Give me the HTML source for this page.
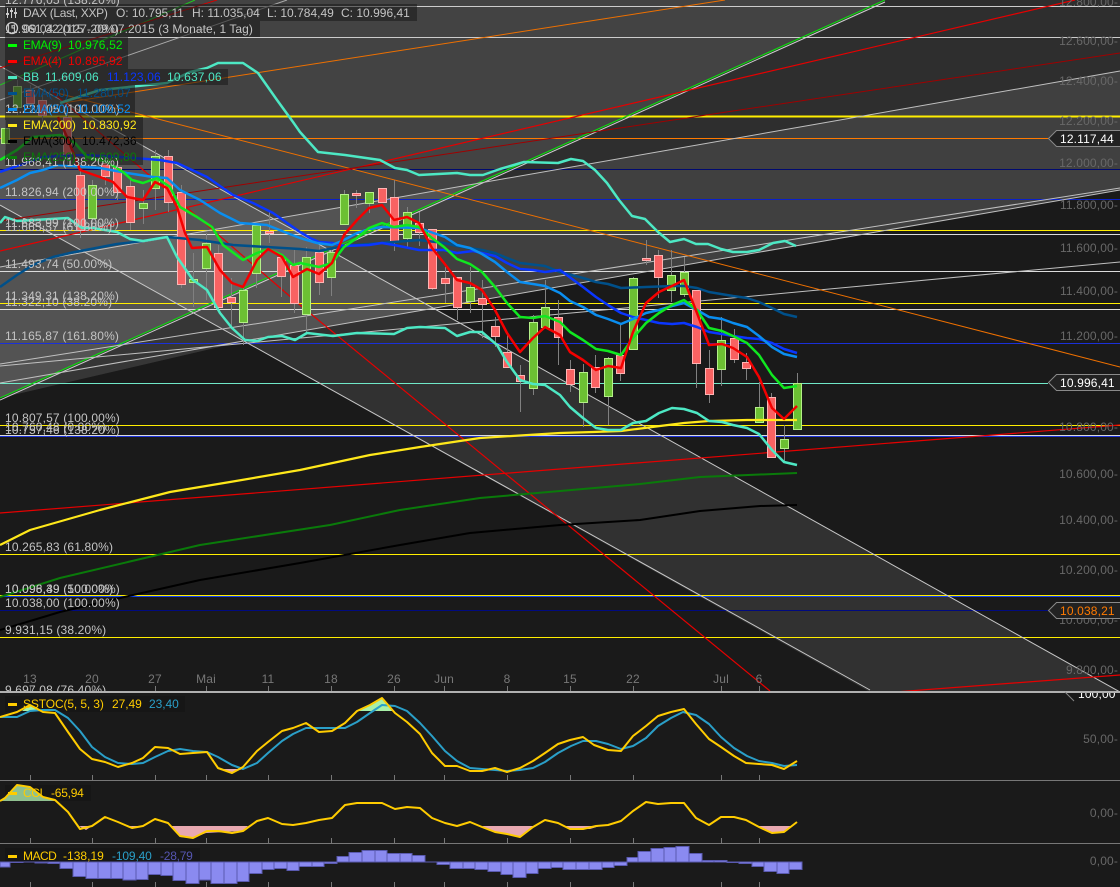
<!DOCTYPE html>
<html><head><meta charset="utf-8"><title>DAX Chart</title>
<style>
html,body{margin:0;padding:0;background:#1a1a1a;width:1120px;height:887px;overflow:hidden}
svg{display:block}
text{font-family:"Liberation Sans",sans-serif;font-size:12px;letter-spacing:.15px}
.l{fill:#c4c4c4}
.a{fill:#686868;text-anchor:end}
.d{fill:#777;text-anchor:middle}
.t{fill:none;stroke-linejoin:round}
</style></head><body>
<svg width="1120" height="887" viewBox="0 0 1120 887" xmlns="http://www.w3.org/2000/svg">
<defs><clipPath id="m"><rect x="0" y="0" width="1120" height="691"/></clipPath>
<clipPath id="p"><rect x="1060" y="693" width="60" height="12"/></clipPath></defs>
<rect width="1120" height="887" fill="#1a1a1a"/>
<g clip-path="url(#m)">
<polygon points="0,398 245,341 1120,190 1120,0 0,0" fill="#fff" fill-opacity=".09"/>
<polygon points="0,267 1120,71 1120,190 245,341 0,398" fill="#fff" fill-opacity=".09"/>
<polygon points="0,398 885,0 0,0" fill="#fff" fill-opacity=".1"/>
<polygon points="0,398 245,341 245,288" fill="#000" fill-opacity=".15"/>
<polygon points="0,66 1120,692 870,692 0,205" fill="#fff" fill-opacity=".1"/>

<!-- horizontal lines -->
<g stroke-width="1" fill="none">
<path d="M0 6.5H1120M0 37.5H1120" stroke="#ccc"/>
<path d="M0 116.5H1120" stroke="#ffee00" stroke-width="2"/>
<path d="M0 138.5H1048" stroke="#ff7a00"/>
<path d="M0 169.5H1120" stroke="#000a70"/>
<path d="M0 199.5H1120" stroke="#0a20c8"/>
<path d="M0 230.5H1120M0 303.5H1120M0 425.5H1120M0 554.5H1120M0 637.5H1120" stroke="#ffee00"/>
<path d="M0 343.5H1120M0 436.5H1120" stroke="#1a30d8"/>
<path d="M0 234.5H1120M0 271.5H1120M0 309.5H1120M0 435.5H1120" stroke="#dcdcdc"/>
<path d="M0 383.5H1048" stroke="#70e8c8"/>
<path d="M0 595.5H1120" stroke="#ffee00"/>
<path d="M0 596.5H1120" stroke="#1040f0"/>
<path d="M0 610.5H1048" stroke="#000a80"/>
</g>

<!-- sloped lines -->
<g fill="none" stroke-width="1">
<path d="M0 400L885 2" stroke="#d0d0d0"/>
<path d="M0 398L885 0" stroke="#10d810" stroke-width="1.2"/>
<path d="M0 85L195 0" stroke="#20c820"/>
<path d="M0 100L287 0" stroke="#aaa"/>
<path d="M0 267L1120 71M0 364L1120 188M0 383L1120 190M0 366L1120 262" stroke="#c0c0c0"/>
<path d="M0 66L1120 692M0 205L870 690" stroke="#c8c8c8"/>
<path d="M57 93L1120 367M63 103L725 0" stroke="#ee7000"/>
<path d="M0 513L1120 425M895 692L1120 675M0 251L1075 0" stroke="#e60000" stroke-width="1.2"/>
<path d="M0 68L217 0" stroke="#d00000"/>
<path d="M0 221L1120 53" stroke="#a00000"/>
<path d="M50 90L135 163L300 305L770 691" stroke="#e60000" stroke-width="1.2"/>
</g>

<!-- wicks -->
<path fill="none" stroke="#808080" d="M5.5 120V150M17.5 80V115M30.5 85V110M42.5 95V122M67.5 110V165M80.5 165V238M92.5 180V225M105.5 155V185M117.5 160V200M130.5 180V230M143.5 190V224M155.5 150V210M168.5 150V212M181.5 185V288M193.5 253V307M206.5 233V300M218.5 245V312M231.5 278V327M243.5 285V345M256.5 225V288M269.5 210V243M281.5 255V297M294.5 250V313M306.5 247V332M319.5 245V295M331.5 250V296M344.5 190V224M356.5 190V208M369.5 192V213M382.5 188V202M394.5 180V251M407.5 207V247M419.5 212V246M432.5 229V290M445.5 267V303M457.5 277V320M470.5 267V313M482.5 280V338M495.5 317V347M507.5 333V367M520.5 365V412M533.5 315V395M545.5 280V327M558.5 300V365M570.5 360V392M583.5 364V427M595.5 355V393M608.5 357V425M620.5 325V381M633.5 277V349M646.5 240V265M658.5 250V298M671.5 250V302M684.5 257V297M696.5 290V388M709.5 350V403M721.5 317V386M734.5 329V363M746.5 353V380M759.5 382V422M771.5 393V458M784.5 425V462M797.5 373V429"/>

<!-- candles -->
<path fill="#6cc033" stroke="#b4f088" d="M1.5 128.5h8V143.5h-8zM13.5 86.5h8V107.5h-8zM88.5 185.5h8V218.5h-8zM139.5 203.5h8V208.5h-8zM151.5 156.5h8V188.5h-8zM189.5 279.5h8V282.5h-8zM202.5 243.5h8V268.5h-8zM239.5 290.5h8V322.5h-8zM252.5 225.5h8V273.5h-8zM302.5 257.5h8V314.5h-8zM327.5 252.5h8V277.5h-8zM340.5 194.5h8V224.5h-8zM365.5 192.5h8V203.5h-8zM403.5 212.5h8V238.5h-8zM466.5 287.5h8V301.5h-8zM529.5 322.5h8V388.5h-8zM541.5 307.5h8V327.5h-8zM579.5 372.5h8V402.5h-8zM604.5 358.5h8V396.5h-8zM629.5 278.5h8V349.5h-8zM667.5 275.5h8V290.5h-8zM680.5 272.5h8V294.5h-8zM717.5 340.5h8V369.5h-8zM755.5 407.5h8V422.5h-8zM780.5 439.5h8V448.5h-8zM793.5 383.5h8V429.5h-8z"/>
<path fill="#f86262" stroke="#ffb4b4" d="M26.5 90.5h8V103.5h-8zM38.5 100.5h8V115.5h-8zM63.5 117.5h8V155.5h-8zM76.5 175.5h8V230.5h-8zM101.5 163.5h8V176.5h-8zM113.5 167.5h8V192.5h-8zM126.5 186.5h8V222.5h-8zM164.5 156.5h8V202.5h-8zM177.5 192.5h8V284.5h-8zM214.5 253.5h8V307.5h-8zM227.5 297.5h8V302.5h-8zM265.5 231.5h8V233.5h-8zM277.5 257.5h8V276.5h-8zM290.5 265.5h8V303.5h-8zM315.5 252.5h8V282.5h-8zM352.5 193.5h8V195.5h-8zM378.5 188.5h8V202.5h-8zM390.5 197.5h8V241.5h-8zM415.5 223.5h8V232.5h-8zM428.5 229.5h8V288.5h-8zM441.5 278.5h8V283.5h-8zM453.5 277.5h8V307.5h-8zM478.5 298.5h8V304.5h-8zM491.5 326.5h8V336.5h-8zM503.5 352.5h8V367.5h-8zM516.5 375.5h8V381.5h-8zM554.5 317.5h8V337.5h-8zM566.5 369.5h8V384.5h-8zM591.5 367.5h8V387.5h-8zM616.5 355.5h8V373.5h-8zM642.5 258.5h8V260.5h-8zM654.5 255.5h8V277.5h-8zM692.5 290.5h8V363.5h-8zM705.5 368.5h8V394.5h-8zM730.5 338.5h8V359.5h-8zM742.5 362.5h8V368.5h-8zM767.5 397.5h8V457.5h-8z"/>

<!-- indicators -->
<g class="t" stroke-width="2">
<polyline stroke="#000" points="0,630 60,612 133,595 200,580 300,563 400,545 470,533 560,525 640,520 700,511 760,506 797,505"/>
<polyline stroke="#0a7a0a" points="0,597 60,578 200,545 330,525 400,510 480,498 560,491 640,484 700,477 797,473"/>
<polyline stroke="#ffe81a" stroke-width="2.2" points="0,545 30,530 100,510 170,492 230,482 300,470 370,455 420,447 480,438 560,433 593,432 621,431 660,426 684,423 709,421 747,420 797,420"/>
<polyline stroke="#00508a" stroke-width="2.5" points="0,287 17,275 33,265 53,257 70,253 117,244 143,241 167,237 200,240 233,245 300,249 319,251 344,246 369,244 394,242 419,240 444,243 457,246 482,250 495,253 507,258 520,263 545,266 560,272 583,278 596,282 608,284 621,288 646,287 672,286 684,286 697,288 709,292 733,296 747,298 759,302 772,308 784,314 797,317"/>
<polyline stroke="#0a36ff" stroke-width="2.5" points="0,172 43,157 83,155 120,157 160,160 177,163 207,177 233,195 253,203 273,213 300,232 310,238 319,242 332,243 344,246 369,245 382,243 394,245 419,250 444,250 457,253 473,251 482,253 495,256 507,263 520,269 533,270 545,272 560,270 583,287 596,297 608,305 621,313 633,317 646,320 659,323 672,324 684,323 697,327 709,332 722,334 733,336 747,338 759,339 772,343 784,349 797,353"/>
<polyline stroke="#0a8ef0" stroke-width="2.5" points="0,188 17,180 30,173 43,170 58,165 100,168 127,173 153,177 167,178 180,190 200,200 220,213 240,223 267,225 287,233 300,238 317,243 332,245 344,240 357,233 369,229 382,227 419,228 445,237 457,245 470,248 482,254 495,262 507,272 520,282 533,284 545,286 560,293 570,301 583,307 596,315 608,319 621,324 633,319 646,313 659,310 672,306 684,303 697,310 709,317 722,319 733,323 747,327 759,336 772,347 784,354 797,357"/>
<polyline stroke="#4de8c4" stroke-width="2.5" points="60,103 100,90 167,83 190,72 207,68 218,63 243,63 258,73 277,100 293,122 300,132 318,152 345,155 380,160 395,168 407,170 419,175 457,173 470,175 483,175 500,169 524,162 558,163 571,159 583,161 595,170 607,183 619,200 632,216 645,219 658,232 670,242 684,239 696,244 708,244 721,249 733,252 747,252 759,250 773,243 785,241 796,246"/>
<polyline stroke="#4de8c4" stroke-width="2.5" points="0,223 5,217 17,221 68,218 82,228 93,228 117,232 130,239 143,241 167,237 177,257 193,280 207,290 220,313 232,328 245,340 257,341 268,337 282,336 295,340 307,333 333,336 357,333 394,334 407,328 420,327 445,328 457,336 470,332 482,332 497,345 507,362 520,380 533,384 545,385 560,395 570,407 583,418 596,428 608,430 621,430 633,423 646,421 659,413 672,408 684,409 697,413 709,421 722,422 733,425 747,428 759,434 772,450 784,462 797,465"/>
<polyline stroke="#10e820" stroke-width="2.5" points="0,160 17,150 33,137 60,135 75,143 87,157 107,162 123,172 132,180 143,183 157,178 170,187 180,207 197,217 212,227 223,245 243,260 257,253 268,249 282,255 293,265 300,263 319,267 332,263 344,247 357,238 369,228 382,223 394,227 407,225 419,227 432,238 444,247 457,259 470,264 482,272 495,287 507,303 520,317 533,318 545,316 560,322 570,332 583,340 596,349 608,351 621,355 633,338 646,323 659,313 672,305 684,300 697,310 709,328 722,331 733,336 747,343 759,355 772,375 784,388 797,386"/>
<polyline stroke="#f40000" stroke-width="2.5" points="58,117 67,137 80,170 100,177 113,182 127,197 143,200 155,182 167,188 177,207 185,233 192,248 207,247 220,270 232,283 243,287 257,260 268,249 282,257 293,277 300,273 307,269 319,274 332,263 344,235 357,220 369,208 382,205 394,220 407,217 419,223 432,248 444,263 457,280 470,283 482,290 495,310 507,333 520,352 533,338 545,327 560,335 570,352 583,360 596,370 608,366 621,368 633,332 646,303 659,292 672,286 684,280 697,313 709,345 722,344 733,348 747,357 759,377 772,408 784,419 797,406"/>
</g>

<!-- legend boxes -->
<g fill="#181818" fill-opacity=".55">
<rect x="5" y="4" width="412" height="17"/><rect x="5" y="21" width="255" height="16"/>
<rect x="5" y="37" width="123" height="16"/><rect x="5" y="53" width="123" height="16"/>
<rect x="5" y="69" width="223" height="16"/><rect x="5" y="85" width="130" height="16"/>
<rect x="5" y="101" width="130" height="16"/><rect x="5" y="117" width="138" height="16"/>
<rect x="5" y="133" width="138" height="16"/><rect x="5" y="149" width="138" height="16"/>
</g>

<!-- left fib labels -->
<g class="l">
<text x="5" y="4">12.776,05 (138.20%)</text>
<text x="5" y="33">11.961,32 (127.20%)</text>
<text x="5" y="113">12.221,05 (100.00%)</text>
<text x="5" y="166">11.968,41 (138.20%)</text>
<text x="5" y="196">11.826,94 (200.00%)</text>
<text x="5" y="227">11.683,99 (100.00%)</text>
<text x="5" y="231">11.665,37 (61.80%)</text>
<text x="5" y="268">11.493,74 (50.00%)</text>
<text x="5" y="300">11.349,31 (138.20%)</text>
<text x="5" y="306">11.322,10 (38.20%)</text>
<text x="5" y="340">11.165,87 (161.80%)</text>
<text x="5" y="422">10.807,57 (100.00%)</text>
<text x="5" y="431">10.760,48 (0.00%)</text>
<text x="5" y="434">10.757,46 (138.20%)</text>
<text x="5" y="551">10.265,83 (61.80%)</text>
<text x="5" y="593">10.096,39 (50.00%)</text>
<text x="5" y="593">10.098,49 (100.00%)</text>
<text x="5" y="607">10.038,00 (100.00%)</text>
<text x="5" y="634">9.931,15 (38.20%)</text>
<text x="5" y="694">9.697,08 (76.40%)</text>
</g>

<!-- legend -->
<g stroke="#ccc" fill="none">
<path d="M7.5 8V18M11.5 8V18M15.5 8V18" />
<path d="M6 14h3M10 11h3M14 13h3" stroke-width="2"/>
<circle cx="12" cy="28" r="5.5" stroke-width="1.3"/><path d="M12 25v3h3"/>
</g>
<text x="23" y="17" class="l" textLength="85">DAX (Last, XXP)</text>
<text x="116" y="17" class="l" textLength="68">O: 10.795,11</text>
<text x="192" y="17" class="l" textLength="68">H: 11.035,04</text>
<text x="267" y="17" class="l" textLength="67">L: 10.784,49</text>
<text x="341" y="17" class="l" textLength="69">C: 10.996,41</text>
<text x="23" y="33" class="l" textLength="230">09.04.2015 - 09.07.2015 (3 Monate, 1 Tag)</text>
<rect x="8" y="44" width="9" height="3" fill="#00ff00"/>
<text x="23" y="49" fill="#00f000" textLength="39">EMA(9)</text><text x="68" y="49" fill="#00f000">10.976,52</text>
<rect x="8" y="60" width="9" height="3" fill="#f00"/>
<text x="23" y="65" fill="#f00000" textLength="39">EMA(4)</text><text x="68" y="65" fill="#f00000">10.895,92</text>
<rect x="8" y="76" width="9" height="3" fill="#4de8c4"/>
<text x="23" y="81" fill="#4de8c4">BB</text><text x="45" y="81" fill="#4de8c4">11.609,06</text><text x="107" y="81" fill="#0a36ff">11.123,06</text><text x="167" y="81" fill="#4de8c4">10.637,06</text>
<rect x="8" y="92" width="9" height="3" fill="#00508a"/>
<text x="23" y="97" fill="#00508a" textLength="46">EMA(50)</text><text x="77" y="97" fill="#00508a">11.280,07</text>
<rect x="8" y="108" width="9" height="3" fill="#0a8ef0"/>
<text x="23" y="113" fill="#0a8ef0" textLength="46">EMA(20)</text><text x="77" y="113" fill="#0a8ef0">11.100,52</text>
<rect x="8" y="124" width="9" height="3" fill="#ffe81a"/>
<text x="23" y="129" fill="#ffe81a" textLength="53">EMA(200)</text><text x="82" y="129" fill="#ffe81a">10.830,92</text>
<rect x="8" y="140" width="9" height="3" fill="#000"/>
<text x="23" y="145" fill="#000" textLength="53">EMA(300)</text><text x="82" y="145" fill="#000">10.472,36</text>
<rect x="8" y="156" width="9" height="3" fill="#0a7a0a"/>
<text x="23" y="161" fill="#0a7a0a" textLength="53">EMA(250)</text><text x="82" y="161" fill="#0a7a0a">10.609,80</text>

<!-- date axis -->
<g class="d">
<text x="30" y="683">13</text><text x="92" y="683">20</text><text x="155" y="683">27</text><text x="206" y="683">Mai</text><text x="268" y="683">11</text><text x="331" y="683">18</text><text x="394" y="683">26</text><text x="444" y="683">Jun</text><text x="507" y="683">8</text><text x="570" y="683">15</text><text x="633" y="683">22</text><text x="721" y="683">Jul</text><text x="759" y="683">6</text>
</g>
<path stroke="#777" d="M30.5 686V691M92.5 686V691M155.5 686V691M206.5 686V691M268.5 686V691M331.5 686V691M394.5 686V691M444.5 686V691M507.5 686V691M570.5 686V691M633.5 686V691M721.5 686V691M759.5 686V691"/>
</g>

<!-- right axis -->
<g class="a">
<text x="1118" y="6">12.800,00-</text><text x="1118" y="45">12.600,00-</text><text x="1118" y="85">12.400,00-</text><text x="1118" y="125">12.200,00-</text><text x="1118" y="167">12.000,00-</text><text x="1118" y="209">11.800,00-</text><text x="1118" y="252">11.600,00-</text><text x="1118" y="295">11.400,00-</text><text x="1118" y="340">11.200,00-</text><text x="1118" y="431">10.800,00-</text><text x="1118" y="478">10.600,00-</text><text x="1118" y="524">10.400,00-</text><text x="1118" y="574">10.200,00-</text><text x="1118" y="624">10.000,00-</text><text x="1118" y="674">9.800,00-</text>
<text x="1118" y="743">50,00-</text><text x="1118" y="817">0,00-</text><text x="1118" y="865">0,00-</text>
</g>
<!-- value tags -->
<g fill="#222" stroke="#8a8a8a">
<path d="M1120 130.5H1056.5L1048.5 138.5L1056.5 146.5H1120"/>
<path d="M1120 374.5H1056.5L1048.5 382.5L1056.5 390.5H1120"/>
<path d="M1120 602.5H1056.5L1048.5 610.5L1056.5 618.5H1120"/>
</g>
<text x="1060" y="143" fill="#fff">12.117,44</text>
<text x="1060" y="387" fill="#fff">10.996,41</text>
<text x="1060" y="615" fill="#ff7a00">10.038,21</text>

<!-- separators -->
<rect x="0" y="691" width="1120" height="2" fill="#b0b0b0"/>
<path d="M0 780.5H1120M0 843.5H1120" stroke="#777"/>
<path d="M1065 692L1074 701" stroke="#888"/>
<text x="1078" y="698" fill="#fff" clip-path="url(#p)">100,00</text>
<path stroke="#777" d="M30.5 775V780M92.5 775V780M155.5 775V780M206.5 775V780M268.5 775V780M331.5 775V780M394.5 775V780M444.5 775V780M507.5 775V780M570.5 775V780M633.5 775V780M721.5 775V780M759.5 775V780M30.5 838V843M92.5 838V843M155.5 838V843M206.5 838V843M268.5 838V843M331.5 838V843M394.5 838V843M444.5 838V843M507.5 838V843M570.5 838V843M633.5 838V843M721.5 838V843M759.5 838V843M30.5 882V887M92.5 882V887M155.5 882V887M206.5 882V887M268.5 882V887M331.5 882V887M394.5 882V887M444.5 882V887M507.5 882V887M570.5 882V887M633.5 882V887M721.5 882V887M759.5 882V887"/>

<!-- SSTOC -->
<rect x="5" y="696" width="180" height="16" fill="#151515" fill-opacity=".8"/>
<path d="M22 711L30 705L43 711ZM357 711L382 698L393 711Z" fill="#a8f0a8"/>
<path d="M218 769L231 772.5L243 769Z" fill="#e8a8b0"/>
<polyline class="t" stroke="#2a9fc8" stroke-width="2" points="0,717 17,717 30,711 43,710 55,710 68,718 80,731 92,747 105,757 118,763 132,764 143,763 155,757 168,751 180,749 193,751 207,752 218,757 232,765 243,769 257,763 268,753 282,741 293,734 306,728 319,728 332,728 345,728 357,722 370,713 382,705 395,706 407,711 420,723 432,736 445,751 457,761 470,768 482,769 495,770 507,771 520,770 533,768 545,762 558,753 571,746 583,741 596,741 608,744 621,749 633,746 646,738 658,726 671,718 683,712 696,715 709,724 721,737 734,748 747,756 759,761 772,763 784,766 797,765"/>
<polyline class="t" stroke="#ffcc00" stroke-width="2" points="0,717 17,712 30,705 43,712 55,713 68,732 80,749 92,759 105,762 118,767 132,763 143,758 155,747 168,748 180,754 193,753 207,752 218,768 232,773 243,767 257,751 268,742 282,731 293,728 306,723 319,732 332,731 345,723 357,711 370,705 382,698 395,713 407,722 420,734 432,753 445,766 457,766 470,771 482,771 495,768 507,772 520,768 533,761 545,753 558,744 570,740 583,737 594,745 608,750 621,751 633,736 646,726 658,716 671,712 684,709 696,724 709,739 721,747 734,756 746,763 759,764 772,765 784,769 797,761"/>
<rect x="8" y="703" width="9" height="3" fill="#ffcc00"/>
<text x="23" y="708" fill="#ffcc00" textLength="81">SSTOC(5, 5, 3)</text><text x="112" y="708" fill="#ffcc00" textLength="30">27,49</text><text x="149" y="708" fill="#2a9fc8" textLength="30">23,40</text>

<!-- CCI -->
<rect x="5" y="785" width="86" height="16" fill="#151515" fill-opacity=".8"/>
<path d="M0 801L5 798L17 785L30 787L43 797L55 801Z" fill="#8fc08f"/>
<path d="M79 826L92 826L86 830ZM129 826L143 826L135 828ZM170 826L248 826L242 831L206 833L193 838L180 837ZM482 826L533 826L520 837L507 834L495 832ZM565 826L600 826L590 829L570 829ZM758 826L792 826L784 832L772 833Z" fill="#e8a8b0"/>
<polyline class="t" stroke="#ffcc00" stroke-width="2" points="0,801 5,798 17,785 30,787 43,797 55,800 68,812 80,829 92,826 105,817 118,822 132,828 143,826 155,819 168,823 180,836 193,838 207,831 218,831 232,833 243,831 257,821 268,818 282,824 293,825 306,823 319,820 332,818 345,805 357,803 370,803 382,803 395,809 407,807 420,808 432,818 445,823 457,826 470,822 482,827 495,832 507,834 520,837 533,827 545,820 558,823 570,829 583,829 596,826 608,825 621,821 633,811 646,802 658,804 671,803 684,803 696,818 709,825 721,817 734,817 746,820 759,827 772,833 784,832 797,822"/>
<rect x="8" y="792" width="9" height="3" fill="#ffcc00"/>
<text x="23" y="797" fill="#ffcc00" textLength="20">CCI</text><text x="51" y="797" fill="#ffcc00" textLength="33">-65,94</text>

<!-- MACD -->
<rect x="5" y="848" width="195" height="16" fill="#151515" fill-opacity=".8"/>
<path fill="#8a8af0" stroke="#5a5ab0" d="M0 862H10V867H0ZM10 862H23V862.5H10ZM23 862H35ZM35 862H48V863H35ZM48 862H60V863.5H48ZM60 862H73V868.5H60ZM73 862H86V876.5H73ZM86 862H98V878.5H86ZM98 862H111V878.5H98ZM111 862H123V878.5H111ZM123 862H136V880H123ZM136 862H148V879.5H136ZM148 862H161V874.5H148ZM161 862H173V875.5H161ZM173 862H186V880.5H173ZM186 862H199V883.5H186ZM199 862H211V880H199ZM211 862H224V883.5H211ZM224 862H237V883.5H224ZM237 862H249V881.5H237ZM249 862H262V873.5H249ZM262 862H274V869.5H262ZM274 862H287V868.5H274ZM287 862H299V870.5H287ZM299 862H312V866.5H299ZM312 862H324V866.5H312ZM324 862H337V863.5H324ZM337 862V856.5H349V862ZM349 862V852.5H362V862ZM362 862V850.5H375V862ZM375 862V850.5H387V862ZM387 862V853.5H400V862ZM400 862V853.5H412V862ZM412 862V855.5H425V862ZM425 862H437ZM437 862H450V864.5H437ZM450 862H463V868.5H450ZM463 862H475V868.5H463ZM475 862H488V869.5H475ZM488 862H501V871.5H488ZM501 862H513V874.5H501ZM513 862H526V877.5H513ZM526 862H538V873.5H526ZM538 862H551V868.5H538ZM551 862H563V867.5H551ZM563 862H576V869.5H563ZM576 862H589V869.5H576ZM589 862H602V869.5H589ZM602 862H614V867.5H602ZM614 862H627V865.5H614ZM627 862V857.5H638V862ZM638 862V851.5H651V862ZM651 862V848.5H664V862ZM664 862V847.5H676V862ZM676 862V846.5H689V862ZM689 862V853.5H702V862ZM702 862V860.5H714V862ZM714 862V860.5H727V862ZM727 862H739V862.5H727ZM739 862H752V863.5H739ZM752 862H764V866.5H752ZM764 862H777V871.5H764ZM777 862H789V873.5H777ZM789 862H802V869.5H789Z"/>
<rect x="8" y="855" width="9" height="3" fill="#ffcc00"/>
<text x="23" y="860" fill="#ffcc00" textLength="34">MACD</text><text x="63" y="860" fill="#ffcc00" textLength="41">-138,19</text><text x="112" y="860" fill="#2a9fc8" textLength="40">-109,40</text><text x="160" y="860" fill="#5555b0" textLength="33">-28,79</text>
</svg>
</body></html>
